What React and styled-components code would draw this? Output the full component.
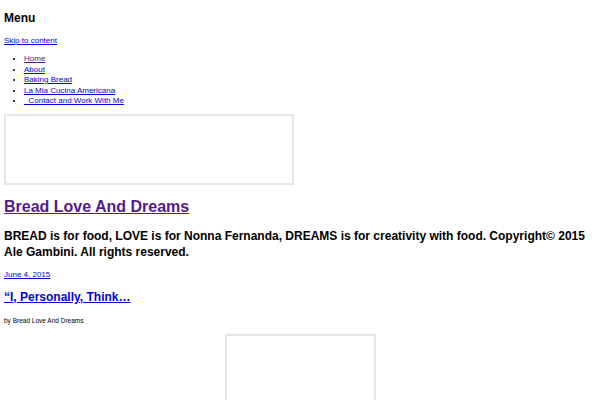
import React from "react";
import styled, { createGlobalStyle } from "styled-components";

const GlobalStyle = createGlobalStyle`
  body {
    margin: 0;
    background: #fff;
    font-family: "Liberation Sans", Arial, sans-serif;
    color: #000;
  }
  a { color: #0000ee; }
`;

const Page = styled.div`
  padding: 0 4px;
  font-size: 8px;
  line-height: 10px;
`;

const MenuTitle = styled.h2`
  font-size: 12px;
  font-weight: bold;
  margin: 11px 0 0;
  line-height: 14px;
`;

const SkipLink = styled.a`
  display: block;
  width: fit-content;
  font-size: 8px;
  line-height: 10px;
  margin-top: 11px;
`;

const NavList = styled.ul`
  margin: 8px 0 0;
  padding-left: 20px;
  font-size: 8px;
  line-height: 10.5px;
`;

const NavLink = styled.a`
  color: ${(p) => (p.$visited ? "#551a8b" : "#0000ee")};
`;

const Placeholder = styled.div`
  width: ${(p) => p.$w}px;
  height: ${(p) => p.$h}px;
  border: 2px solid #e6e6e6;
  box-sizing: border-box;
  margin: ${(p) => (p.$center ? "0 auto" : "0")};
`;

const Banner = styled.div`
  margin-top: 7.5px;
`;

const SiteTitle = styled.h1`
  font-size: 16px;
  font-weight: bold;
  line-height: 20px;
  margin: 12px 0 0;
  a { color: #551a8b; }
`;

const Description = styled.p`
  font-size: 12px;
  font-weight: bold;
  line-height: 16px;
  margin: 11px 0 0;
`;

const PostDate = styled.a`
  display: block;
  width: fit-content;
  font-size: 8px;
  line-height: 10px;
  margin-top: 10px;
`;

const PostTitle = styled.h2`
  font-size: 12px;
  font-weight: bold;
  line-height: 14px;
  margin: 10px 0 0;
`;

const Byline = styled.p`
  font-size: 6.5px;
  line-height: 8px;
  margin: 13px 0 0;
`;

const Figure = styled.div`
  margin-top: 9px;
`;

const navItems = [
  "Home",
  "About",
  "Baking Bread",
  "La Mia Cucina Americana",
  "_Contact and Work With Me",
];

export default function App() {
  return (
    <Page>
      <GlobalStyle />
      <MenuTitle>Menu</MenuTitle>
      <SkipLink href="#content">Skip to content</SkipLink>
      <NavList>
        {navItems.map((item, i) => (
          <li key={item}>
            <NavLink href="#" $visited={i === 0}>{item}</NavLink>
          </li>
        ))}
      </NavList>
      <Banner>
        <Placeholder $w={290} $h={71} />
      </Banner>
      <SiteTitle>
        <a href="#">Bread Love And Dreams</a>
      </SiteTitle>
      <Description>
        BREAD is for food, LOVE is for Nonna Fernanda, DREAMS is for creativity
        with food. Copyright© 2015 Ale Gambini. All rights reserved.
      </Description>
      <PostDate href="#">June 4, 2015</PostDate>
      <PostTitle>
        <a href="#">“I, Personally, Think…</a>
      </PostTitle>
      <Byline>by Bread Love And Dreams</Byline>
      <Figure>
        <Placeholder $w={151} $h={120} $center />
      </Figure>
    </Page>
  );
}
